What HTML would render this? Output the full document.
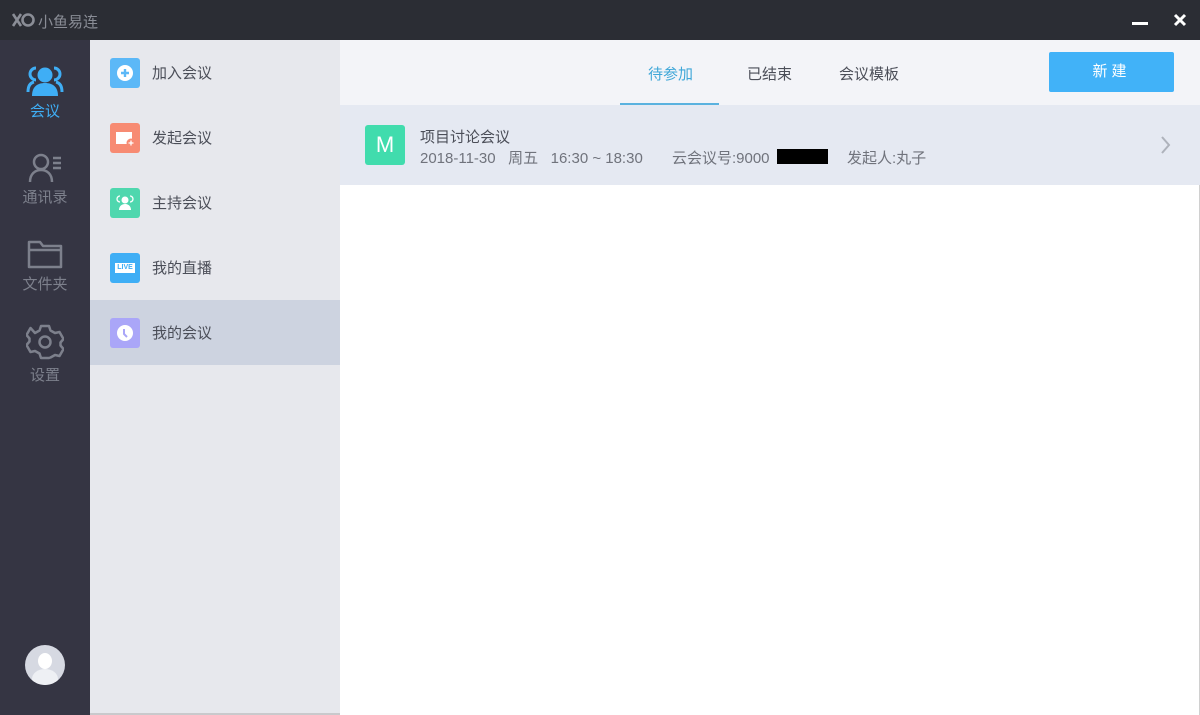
<!DOCTYPE html>
<html><head><meta charset="utf-8"><style>
*{margin:0;padding:0;box-sizing:border-box}
body{width:1200px;height:715px;overflow:hidden;font-family:"Liberation Sans","Noto Sans CJK SC",sans-serif;background:#fff;position:relative}
.tb{position:absolute;left:0;top:0;width:1200px;height:40px;background:#2b2d34}
.tb .t{position:absolute;left:38px;top:11px;font-size:15px;color:#8a8d96}
.nav{position:absolute;left:0;top:40px;width:90px;height:675px;background:#353543}
.ni{position:absolute;left:0;width:90px;text-align:center;font-size:15px;color:#7d808c}
.ni svg{display:block;margin:0 auto 4px}
.sub{position:absolute;left:90px;top:40px;width:250px;height:675px;background:#e7e8ed;border-bottom:2px solid #c9c9cc}
.si{position:absolute;left:0;width:250px;height:65px}
.si .ic{position:absolute;left:20px;top:18px;width:30px;height:30px;border-radius:3px}
.si .l{position:absolute;left:62px;top:22px;font-size:15px;color:#4b4e58}
.main{position:absolute;left:340px;top:40px;width:860px;height:675px;background:#fff;border-right:1px solid #d0d0d0}
.hd{position:absolute;left:0;top:0;width:860px;height:65px;background:#f3f4f8}
.tab{position:absolute;top:23px;font-size:15px;color:#4b4e58}
.row{position:absolute;left:0;top:65px;width:860px;height:80px;background:#e5e9f2}
</style></head><body>
<div class="tb">
<svg style="position:absolute;left:11px;top:12px" width="24" height="16" viewBox="0 0 24 16"><path d="M2 2 L10 14 M10 2 L2 14" stroke="#8a8d96" stroke-width="2.6" fill="none"/><circle cx="17" cy="8" r="5.5" stroke="#8a8d96" stroke-width="2.6" fill="none"/></svg>
<div class="t">小鱼易连</div>
<div style="position:absolute;left:1132px;top:22px;width:16px;height:3px;background:#fff"></div>
<svg style="position:absolute;left:1173px;top:13px" width="14" height="14" viewBox="0 0 14 14"><path d="M2 2L12 12M12 2L2 12" stroke="#fff" stroke-width="3"/></svg>
</div>
<div class="nav">
<div class="ni" style="top:26px;color:#3faef5"><svg width="38" height="30" viewBox="0 0 38 30"><circle cx="19" cy="9" r="7.5" fill="#3faef5"/><path d="M6 30c0-9 5-13 13-13s13 4 13 13z" fill="#3faef5"/><path d="M10 2a6 6 0 0 0 0 12M2 26c0-6 2-9 6-10M28 2a6 6 0 0 1 0 12M36 26c0-6-2-9-6-10" stroke="#3faef5" stroke-width="3" fill="none"/></svg>会议</div>
<div class="ni" style="top:112px"><svg width="38" height="30" viewBox="0 0 38 30"><circle cx="15" cy="10" r="7" stroke="#7d808c" stroke-width="2.5" fill="none"/><path d="M4 30c0-8 5-12 11-12s11 4 11 12" stroke="#7d808c" stroke-width="2.5" fill="none"/><path d="M27 6h8M27 11h8M27 16h8" stroke="#7d808c" stroke-width="2.5"/></svg>通讯录</div>
<div class="ni" style="top:199px"><svg width="38" height="30" viewBox="0 0 38 30"><path d="M3 3h11l3 4h18v21H3z" stroke="#7d808c" stroke-width="2.5" fill="none" stroke-linejoin="round"/><path d="M3 11h32" stroke="#7d808c" stroke-width="2.5"/></svg>文件夹</div>
<div class="ni" style="top:284px"><svg width="38" height="36" viewBox="0 0 38 36"><path d="M15 2h8l1.5 4.5 4.5 2.5 4.5-1 4 7-3 3.5v3l3 3.5-4 7-4.5-1-4.5 2.5L23 34h-8l-1.5-4.5L9 27l-4.5 1-4-7 3-3.5v-3l-3-3.5 4-7L9 9l4.5-2.5z" stroke="#7d808c" stroke-width="2.5" fill="none" stroke-linejoin="round"/><circle cx="19" cy="18" r="5.5" stroke="#7d808c" stroke-width="2.5" fill="none"/></svg>设置</div>
<div style="position:absolute;left:25px;top:605px;width:40px;height:40px;border-radius:50%;background:#d6d9e2;overflow:hidden"><div style="position:absolute;left:13px;top:8px;width:14px;height:16px;border-radius:50%;background:#fff"></div><div style="position:absolute;left:7px;top:24px;width:26px;height:20px;border-radius:50% 50% 0 0;background:#eef0f4"></div></div>
</div>
<div class="sub">
<div class="si" style="top:0"><div class="ic" style="background:#5cb8f7"><svg width="30" height="30"><circle cx="15" cy="15" r="8" fill="#fff"/><path d="M15 11v8M11 15h8" stroke="#5cb8f7" stroke-width="2.4"/></svg></div><div class="l">加入会议</div></div>
<div class="si" style="top:65px"><div class="ic" style="background:#f78b73"><svg width="30" height="30"><rect x="6" y="9" width="16" height="12" fill="#fff"/><circle cx="21" cy="20" r="4.5" fill="#f78b73"/><path d="M21 17.5v5M18.5 20h5" stroke="#fff" stroke-width="1.3"/></svg></div><div class="l">发起会议</div></div>
<div class="si" style="top:130px"><div class="ic" style="background:#4fd7ae"><svg width="30" height="30"><circle cx="15" cy="12" r="3.5" fill="#fff"/><path d="M9 22c0-4 3-6 6-6s6 2 6 6z" fill="#fff"/><path d="M10 8a3 3 0 0 0 0 6M20 8a3 3 0 0 1 0 6" stroke="#fff" stroke-width="1.3" fill="none"/></svg></div><div class="l">主持会议</div></div>
<div class="si" style="top:195px"><div class="ic" style="background:#3faef5"><div style="position:absolute;left:5px;top:10px;width:20px;height:10px;background:#fff;font-size:7px;font-weight:bold;color:#3faef5;text-align:center;line-height:10px">LIVE</div></div><div class="l">我的直播</div></div>
<div class="si" style="top:260px;background:#cdd3e0"><div class="ic" style="background:#aaa6f8"><svg width="30" height="30"><circle cx="15" cy="15" r="8" fill="#fff"/><path d="M14 11v5l3 3" stroke="#aaa6f8" stroke-width="2" fill="none"/></svg></div><div class="l">我的会议</div></div>
</div>
<div class="main">
<div class="hd">
<div class="tab" style="left:308px;color:#3fa7d8">待参加</div>
<div style="position:absolute;left:280px;top:63px;width:99px;height:2px;background:#5ab2df"></div>
<div class="tab" style="left:407px">已结束</div>
<div class="tab" style="left:499px">会议模板</div>
<div style="position:absolute;left:709px;top:12px;width:125px;height:40px;background:#41b2f8;border-radius:2px;color:#fff;font-size:15px;text-align:center;line-height:40px;letter-spacing:4px">新建</div>
</div>
<div class="row">
<div style="position:absolute;left:25px;top:20px;width:40px;height:40px;background:#41dcad;border-radius:3px;color:#fff;font-size:22px;text-align:center;line-height:40px">M</div>
<div style="position:absolute;left:80px;top:21px;font-size:15px;color:#4b4e58">项目讨论会议</div>
<div style="position:absolute;left:80px;top:42px;font-size:15px;color:#70737c;white-space:pre">2018-11-30   周五   16:30 ~ 18:30       云会议号:9000</div>
<div style="position:absolute;left:437px;top:44px;width:51px;height:15px;background:#000"></div>
<div style="position:absolute;left:507px;top:42px;font-size:15px;color:#70737c">发起人:丸子</div>
<svg style="position:absolute;left:820px;top:30px" width="12" height="20"><path d="M2 2l7 8-7 8" stroke="#aeb2bb" stroke-width="2" fill="none"/></svg>
</div>
</div>
</body></html>
